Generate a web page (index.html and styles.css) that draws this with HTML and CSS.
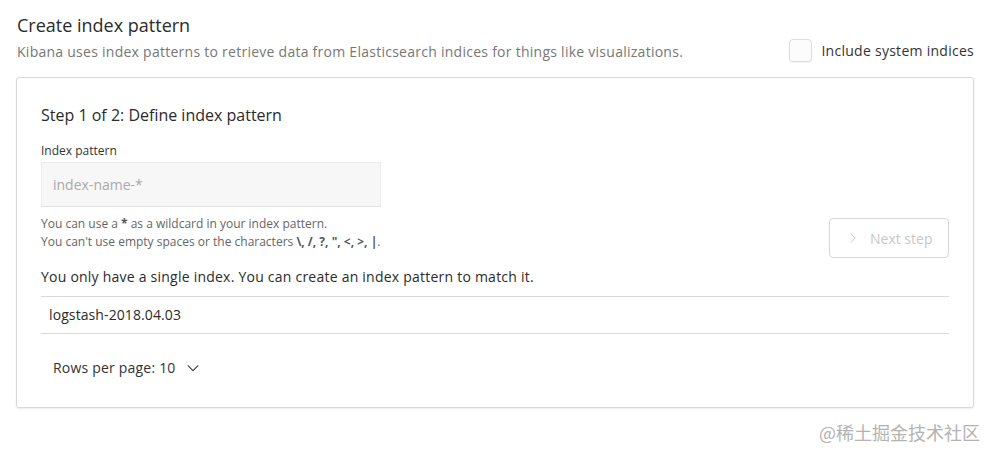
FILE: index.html
```html
<!DOCTYPE html>
<html>
<head>
<meta charset="utf-8">
<link rel="stylesheet" href="styles.css">
</head>
<body>
<div class="page">
  <div class="header">
    <div class="header-text">
      <h1 class="title">Create index pattern</h1>
      <p class="subtitle">Kibana uses index patterns to retrieve data from Elasticsearch indices for things like visualizations.</p>
    </div>
    <label class="check">
      <span class="checkbox"></span>
      <span class="check-label">Include system indices</span>
    </label>
  </div>
  <div class="panel">
    <h2 class="step">Step 1 of 2: Define index pattern</h2>
    <div class="form-row">
      <div class="field">
        <div class="field-label">Index pattern</div>
        <div class="input">index-name-*</div>
        <div class="help">You can use a <b>*</b> as a wildcard in your index pattern.<br>You can't use empty spaces or the characters <b>\, /, ?, ", &lt;, &gt;, |</b>.</div>
      </div>
      <button class="next">
        <svg width="12" height="12" viewBox="0 0 16 16"><path d="M5 2 L11 8 L5 14" fill="none" stroke="#c9c9c9" stroke-width="1.3"/></svg>
        <span>Next step</span>
      </button>
    </div>
    <p class="single">You only have a single index. You can create an index pattern to match it.</p>
    <div class="table">
      <div class="row">logstash-2018.04.03</div>
    </div>
    <div class="pager">
      <span>Rows per page: 10</span>
      <svg width="14" height="14" viewBox="0 0 16 16"><path d="M2 5 L8 11 L14 5" fill="none" stroke="#444" stroke-width="1.3"/></svg>
    </div>
  </div>
  <div class="watermark">@稀土掘金技术社区</div>
</div>
</body>
</html>
```
FILE: styles.css
```css
* { box-sizing: border-box; }
html, body { margin: 0; padding: 0; background: #fff; }
body { font-family: "Open Sans", "Noto Sans", sans-serif; color: #333; }
.page { position: relative; height: 450px; padding: 12px 13px 0 16px; }
.header { display: flex; justify-content: space-between; align-items: flex-start; padding-left: 1px; }
.title { font-size: 18px; font-weight: 400; margin: 0; line-height: 26px; color: #2b2b2b; }
.subtitle { font-size: 14px; margin: 3px 0 0; line-height: 22px; color: #777; letter-spacing: 0.26px; }
.check { display: flex; align-items: center; gap: 9px; margin-top: 27px; }
.checkbox { width: 23px; height: 23px; border: 1px solid #dcdcdc; border-radius: 4px; background: #fcfcfc; box-shadow: 0 1px 1px rgba(0,0,0,0.05); }
.check-label { font-size: 14px; color: #333; letter-spacing: 0.27px; }
.panel { margin-top: 14px; border: 1px solid #d9d9d9; border-radius: 3px; box-shadow: 0 1px 2px rgba(0,0,0,0.08); padding: 24px 24px 29px 24px; width: 958px; }
.step { font-size: 16px; font-weight: 400; margin: 0; line-height: 26px; color: #2b2b2b; }
.form-row { display: flex; justify-content: space-between; align-items: flex-start; margin-top: 14px; }
.field-label { font-size: 12px; line-height: 18px; color: #333; }
.input { margin-top: 2px; width: 340px; height: 45px; background: #f7f7f7; border: 1px solid #ececec; border-bottom-color: #e2e2e2; font-size: 14px; color: #aaa; padding-left: 11px; line-height: 43px; }
.help { margin-top: 8px; font-size: 12px; line-height: 18px; color: #666; }
.help b { color: #555; font-weight: 700; }
.next { display: flex; align-items: center; gap: 11px; width: 120px; height: 40px; margin-top: 76px; margin-bottom: 1px; border: 1px solid #d6d6d6; border-radius: 4px; background: #fff; font-family: inherit; font-size: 14px; color: #c8c8c8; padding: 0 0 0 17px; }
.single { margin: 8px 0 0; font-size: 14px; line-height: 20px; color: #2b2b2b; letter-spacing: 0.23px; }
.table { margin-top: 9px; border-top: 1px solid #d9d9d9; border-bottom: 1px solid #d9d9d9; }
.row { font-size: 14px; line-height: 36px; padding-left: 8px; color: #2b2b2b; letter-spacing: 0.1px; }
.pager { display: flex; align-items: center; gap: 10px; margin-top: 24px; padding-left: 12px; font-size: 14px; line-height: 20px; color: #333; letter-spacing: 0.2px; }
.watermark { position: absolute; right: 7px; top: 420px; font-family: "Noto Sans CJK SC", sans-serif; font-size: 18px; line-height: 24px; color: #b3b3b3; }
```
